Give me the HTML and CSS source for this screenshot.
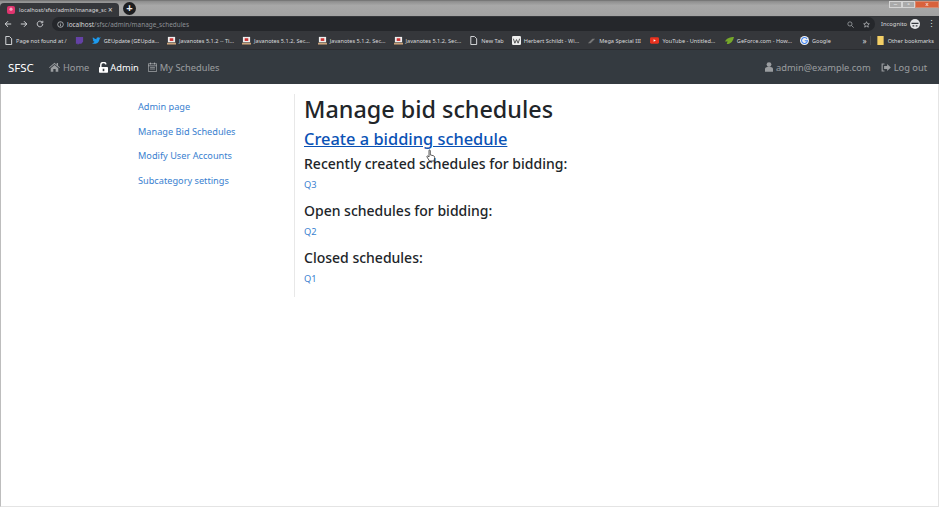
FILE: index.html
```html
<!DOCTYPE html>
<html lang="en">
<head>
<meta charset="utf-8">
<title>Manage bid schedules</title>
<link rel="stylesheet" href="styles.css">
</head>
<body>
<div class="window">
  <div class="tabstrip">
    <div class="tab">
      <svg class="favicon" viewBox="0 0 10 10"><rect width="10" height="10" rx="2.5" fill="#e0356f"/><circle cx="5" cy="4" r="2" fill="#f7a5c0"/></svg>
      <span class="tab-title">localhost/sfsc/admin/manage_sc</span>
      <span class="tab-close">×</span>
    </div>
    <div class="newtab">+</div>
    <div class="winctl"><span class="ctl">–</span><span class="ctl">▫</span><span class="ctl close">x</span></div>
  </div>
  <div class="toolbar">
    <svg class="tool" viewBox="0 0 10 10"><path d="M9 5H1.5M5 1.5L1.5 5 5 8.5" fill="none" stroke="#d8dade" stroke-width="1.2"/></svg>
    <svg class="tool" viewBox="0 0 10 10"><path d="M1 5h7.500M5 1.500L8.500 5 5 8.500" fill="none" stroke="#d8dade" stroke-width="1.200"/></svg>
    <svg class="tool" viewBox="0 0 10 10"><path d="M8.500 5A3.500 3.500 0 1 1 7.400 2.400M8.500 1v2.500H6" fill="none" stroke="#d8dade" stroke-width="1.100"/></svg>
    <div class="omnibox">
      <svg class="info" viewBox="0 0 10 10"><circle cx="5" cy="5" r="4" fill="none" stroke="#cfd2d6"/><path d="M5 4.500v3M5 2.500v1" stroke="#cfd2d6"/></svg>
      <span class="url"><b>localhost</b>/sfsc/admin/manage_schedules</span>
      <svg class="omni-icon" viewBox="0 0 10 10"><circle cx="4.200" cy="4.200" r="3" fill="none" stroke="#aeb1b5"/><path d="M6.500 6.500L9.500 9.500" stroke="#aeb1b5"/></svg>
      <svg class="omni-icon" viewBox="0 0 10 10"><path d="M5 1l1.200 2.700 2.900.3-2.200 1.900.7 2.900L5 7.300 2.400 8.800l.7-2.900L.9 4l2.900-.3z" fill="none" stroke="#cfd2d6" stroke-width=".9"/></svg>
    </div>
    <span class="incognito">Incognito</span>
    <svg class="avatar" viewBox="0 0 10 10"><circle cx="5" cy="5" r="5" fill="#e4e5e7"/><path d="M1.500 4.300h7M2.500 6.800h1.800M5.700 6.800h1.800" stroke="#35383d" stroke-width="1.200"/></svg>
    <span class="dots">⋮</span>
  </div>
  <div class="bookmarks">
    <span class="bm"><svg class="bm-ic" viewBox="0 0 10 10"><path d="M2 .5h4L8.500 3v6.500H2z" fill="none" stroke="#e8e9eb"/></svg>Page not found at /</span>
    <span class="bm"><svg class="bm-ic bm-solo" viewBox="0 0 10 10"><path d="M1 1h8v5.500L7 8.500H4.500L3 10V8.500H1z" fill="#6441a5"/></svg></span>
    <span class="bm"><svg class="bm-ic" viewBox="0 0 10 10"><path d="M0 8c3 1.500 7.500 1 8.500-5L10 1.500 8.500 2C7 .5 4.500 1.500 5 3.500 3.500 3.500 2 2.500 1 1.500c-.5 1.500 0 2.500 1 3.300L1 4.500c.200 1 .800 1.800 1.800 2C2.300 7.300 1 8 0 8z" fill="#1d9bf0"/></svg>GEUpdate (GEUpda...</span>
    <span class="bm"><svg class="bm-ic" viewBox="0 0 10 10"><rect x="1" y="1" width="8" height="6" fill="#eee"/><rect x="3" y="2.500" width="4" height="3" fill="#c33"/><rect y="7.500" width="10" height="2" fill="#c9a27a"/></svg>Javanotes 5.1.2 -- Ti...</span>
    <span class="bm"><svg class="bm-ic" viewBox="0 0 10 10"><rect x="1" y="1" width="8" height="6" fill="#eee"/><rect x="3" y="2.500" width="4" height="3" fill="#c33"/><rect y="7.500" width="10" height="2" fill="#c9a27a"/></svg>Javanotes 5.1.2, Sec...</span>
    <span class="bm"><svg class="bm-ic" viewBox="0 0 10 10"><rect x="1" y="1" width="8" height="6" fill="#eee"/><rect x="3" y="2.500" width="4" height="3" fill="#c33"/><rect y="7.500" width="10" height="2" fill="#c9a27a"/></svg>Javanotes 5.1.2, Sec...</span>
    <span class="bm"><svg class="bm-ic" viewBox="0 0 10 10"><rect x="1" y="1" width="8" height="6" fill="#eee"/><rect x="3" y="2.500" width="4" height="3" fill="#c33"/><rect y="7.500" width="10" height="2" fill="#c9a27a"/></svg>Javanotes 5.1.2, Sec...</span>
    <span class="bm"><svg class="bm-ic" viewBox="0 0 10 10"><path d="M2 .5h4L8.500 3v6.500H2z" fill="none" stroke="#e8e9eb"/></svg>New Tab</span>
    <span class="bm"><svg class="bm-ic" viewBox="0 0 10 10"><rect width="10" height="10" rx="1.500" fill="#eee"/><path d="M1.500 3l1.700 5L5 4l1.800 4L8.500 3" fill="none" stroke="#333" stroke-width=".9"/></svg>Herbert Schildt - Wi...</span>
    <span class="bm bm-wide"><svg class="bm-ic" viewBox="0 0 10 10"><path d="M1 8l5-5h3L4 8z" fill="#777"/></svg>Mega Special III</span>
    <span class="bm bm-wide"><svg class="bm-ic" viewBox="0 0 10 10"><rect y="1.500" width="10" height="7" rx="1.500" fill="#e8321f"/><path d="M4 3.500l2.500 1.500L4 6.500z" fill="#fff"/></svg>YouTube - Untitled...</span>
    <span class="bm"><svg class="bm-ic" viewBox="0 0 10 10"><path d="M0 6c2-4 6-5 10-5-1 4-3 8-8 8 0-1 .5-2 1-3z" fill="#76a82a"/></svg>GeForce.com - How...</span>
    <span class="bm"><svg class="bm-ic" viewBox="0 0 10 10"><circle cx="5" cy="5" r="5" fill="#f1f1f1"/><path d="M7.800 3.200A3.300 3.300 0 1 0 8.300 5.300H5.200" fill="none" stroke="#4285f4" stroke-width="1.200"/></svg>Google</span>
    <span class="bm-more">»</span>
    <span class="bm other"><svg class="bm-ic" viewBox="0 0 10 10"><path d="M1.500 0h7v10h-7z" fill="#f4cf66"/></svg>Other bookmarks</span>
  </div>
  <nav class="navbar">
    <span class="brand">SFSC</span>
    <a class="nav-link"><svg class="nav-ic home" viewBox="0 0 14 12"><path d="M7 .5L0 6.500l.8.900L7 2.200l6.200 5.200.8-.9-2.500-2.100V1h-1.700v2z M2.200 7.500V12h3.300V8.500h3V12h3.300V7.500L7 3.500z" fill="currentColor"/></svg>Home</a>
    <a class="nav-link active"><svg class="nav-ic lock" viewBox="0 0 11 13"><rect y="6" width="11" height="7" rx="1" fill="currentColor"/><path d="M2.200 6V3.500a3.200 3.200 0 0 1 6.300-.8" fill="none" stroke="currentColor" stroke-width="1.800"/><rect x="4.500" y="8" width="2" height="3" fill="#343a40"/></svg>Admin</a>
    <a class="nav-link"><svg class="nav-ic cal" viewBox="0 0 11 12"><path d="M.5 2h10v9.500H.5z M.5 4.500h10 M3 .5V3 M8 .5V3 M2.500 6.500h6 M2.500 8.500h6" fill="none" stroke="currentColor"/></svg>My Schedules</a>
    <div class="nav-right">
      <a class="nav-link"><svg class="nav-ic user" viewBox="0 0 10 12"><circle cx="5" cy="3" r="3" fill="currentColor"/><path d="M0 12V8.500C0 7 1.500 6 3 6h4c1.500 0 3 1 3 2.500V12z" fill="currentColor"/></svg>admin@example.com</a>
      <a class="nav-link"><svg class="nav-ic logout" viewBox="0 0 13 11"><path d="M4.500 1H1.500v9h3" fill="none" stroke="currentColor" stroke-width="1.500"/><path d="M4 3.500h4V.8L12.800 5.500 8 10.200V7.500H4z" fill="currentColor"/></svg>Log out</a>
    </div>
  </nav>
  <main class="page">
    <aside class="sidebar">
      <a class="side-link">Admin page</a>
      <a class="side-link">Manage Bid Schedules</a>
      <a class="side-link">Modify User Accounts</a>
      <a class="side-link">Subcategory settings</a>
    </aside>
    <section class="content">
      <h1>Manage bid schedules</h1>
      <a class="create">Create a bidding schedule</a>
      <h2>Recently created schedules for bidding:</h2>
      <a class="item">Q3</a>
      <h2>Open schedules for bidding:</h2>
      <a class="item">Q2</a>
      <h2>Closed schedules:</h2>
      <a class="item">Q1</a>
      <svg class="cursor" viewBox="0 0 10 14"><path d="M3 1.200c.7-.6 1.300 0 1.300.7v4l3 .8c1 .3 1.500 1 1.300 2l-.6 3.300H3.500L1 8c-.4-.8.500-1.500 1.200-.8L3 8z" fill="#fff" stroke="#333" stroke-width=".8"/></svg>
    </section>
  </main>
</div>
</body>
</html>
```

FILE: styles.css
```css
* { box-sizing: border-box; }
html, body { margin: 0; padding: 0; }
body { width: 939px; height: 507px; overflow: hidden; background: #fff; font-family: "Noto Sans", "Open Sans", sans-serif; }
.window { height: 507px; display: flex; flex-direction: column; border-left: 1px solid #bdbdbd; border-right: 1px solid #e4e4e4; border-bottom: 1px solid #e4e4e4; }

.tabstrip { height: 16px; flex: none; display: flex; align-items: flex-end; background: linear-gradient(#8c8c8c, #a8a8a8 30%, #a2a2a2); border-top: 1px solid #777; margin: 0 -1px; }
.tab { width: 119px; height: 13px; background: #35373b; border-radius: 4px 4px 0 0; display: flex; align-items: center; padding-left: 7px; color: #d9dadc; font-size: 5.700px; white-space: nowrap; }
.favicon { width: 8px; height: 8px; margin-right: 4px; flex: none; }
.tab-title { width: 87px; flex: none; }
.tab-close { font-size: 8px; margin-left: 2px; }
.newtab { width: 13px; height: 13px; margin-left: 4px; margin-bottom: 1px; border-radius: 50%; background: #1d1e21; color: #eee; font: 700 11px/12px "Liberation Sans", sans-serif; text-align: center; }
.winctl { margin-left: auto; align-self: flex-start; display: flex; height: 7px; }
.ctl { width: 13px; background: #aaa; border: 1px solid #d5d5d5; color: #fff; font: 6px/5px "Liberation Sans", sans-serif; text-align: center; }
.ctl.close { width: 24px; background: #d9623c; border-color: #d78a70; }

.toolbar { height: 16px; flex: none; margin: 0 -1px; background: #35373b; display: flex; align-items: center; padding-left: 4px; color: #d9dadc; }
.tool { width: 8px; height: 8px; margin-right: 8px; flex: none; }
.omnibox { width: 823px; height: 14px; border-radius: 7px; background: #25272b; display: flex; align-items: center; padding-left: 5px; flex: none; }
.info { width: 7px; height: 7px; margin-right: 3px; flex: none; }
.url { font-size: 6.400px; color: #8d9095; flex: 1; white-space: nowrap; }
.url b { font-weight: 400; color: #d9dadc; }
.omni-icon { width: 7px; height: 7px; margin-right: 9px; flex: none; }
.omni-icon:last-child { margin-right: 5px; }
.incognito { font-size: 5.800px; margin-left: 6px; color: #d9dadc; flex: none; }
.avatar { width: 10px; height: 10px; margin-left: 3px; flex: none; }
.dots { font-size: 9px; line-height: 10px; margin-left: 7px; }

.bookmarks { height: 18px; flex: none; margin: 0 -1px; background: #35373b; border-bottom: 1px solid #2a2c30; display: flex; align-items: center; padding: 0 5px 0 4px; color: #d9dadc; font-size: 5.600px; white-space: nowrap; }
.bm { display: flex; align-items: center; margin-right: 8px; flex: none; }
.bm-wide { margin-right: 9.500px; }
.bm-ic { width: 9px; height: 9px; margin-right: 3px; flex: none; }
.bm-ic.bm-solo { margin-right: 0; }
.bm-more { margin-left: auto; font-size: 8px; margin-right: 3px; }
.other { border-left: 1px solid #4a4c50; padding-left: 5px; margin-right: 0; }

.navbar { height: 34px; flex: none; margin: 0 -1px; background: #343a40; display: flex; align-items: center; padding: 0 12px 0 8px; font-size: 9.300px; color: rgba(255,255,255,.5); }
.brand { color: #fff; font-size: 11.500px; margin-right: 15px; }
.nav-link { display: flex; align-items: center; margin-right: 10px; color: rgba(255,255,255,.5); white-space: nowrap; }
.nav-link.active { color: #fff; margin-right: 9px; }
.nav-ic { flex: none; margin-right: 3px; }
.nav-ic.lock { margin-right: 2px; }
.home { width: 11px; height: 10px; }
.lock { width: 9px; height: 11px; }
.cal { width: 9px; height: 10px; }
.user { width: 8px; height: 10px; }
.logout { width: 10px; height: 9px; }
.nav-right { margin-left: auto; display: flex; }
.nav-right .nav-link:last-child { margin-right: 0; }

.page { flex: 1; display: flex; align-items: flex-start; padding: 10px 0 0 137px; }
.sidebar { width: 156px; display: flex; flex-direction: column; gap: 10px; padding-top: 6px; }
.side-link { color: #3a7fd0; font-size: 9.200px; line-height: 14.650px; }
.content { position: relative; height: 203px; border-left: 1px solid #e8e8e8; padding-left: 9px; width: 400px; color: #212529; }
h1 { margin: 0; font-size: 23.350px; line-height: 30px; font-weight: 500; }
.create { display: block; margin-top: 2px; font-size: 16.400px; line-height: 26px; color: #0a52b5; text-decoration: underline; font-weight: 500; }
h2 { margin: 0; font-size: 14px; line-height: 22px; font-weight: 500; padding-top: 1px; }
.item { display: block; color: #3a7fd0; font-size: 9.300px; line-height: 14px; margin: 3px 0 7px; }
.cursor { position: absolute; left: 131px; top: 55px; width: 10px; height: 14px; }
```
